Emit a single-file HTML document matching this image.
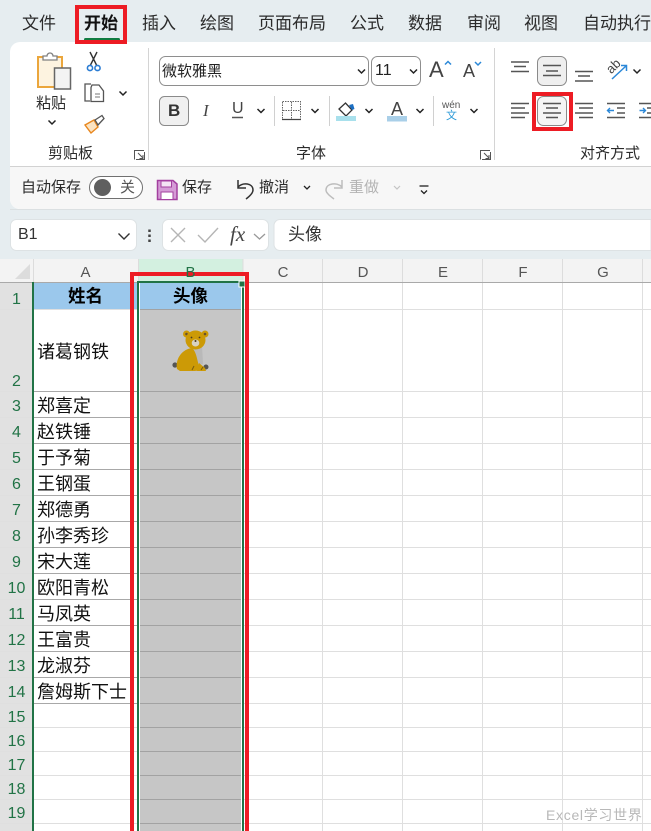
<!DOCTYPE html>
<html lang="zh">
<head>
<meta charset="utf-8">
<title>Excel</title>
<style>
html,body{margin:0;padding:0;}
body{width:651px;height:831px;overflow:hidden;position:relative;background:#fff;font-family:"Liberation Sans","Noto Sans CJK SC",sans-serif;color:#222;}
#g{position:absolute;left:0;top:0;}
.t{position:absolute;white-space:nowrap;line-height:1;}
.tab{font-size:17px;top:15px;color:#2b2b2b;}
.c{font-size:18px;left:37px;color:#111;}
.h{font-size:17.5px;font-weight:700;color:#000;top:288px;}
.r{font-size:16px;color:#217346;text-align:center;width:33px;left:0;}
.ch{font-size:15px;color:#555;top:265px;text-align:center;}
.s{font-size:15px;color:#2b2b2b;}
</style>
</head>
<body>
<svg id="g" width="651" height="831" viewBox="0 0 651 831" fill="none" xmlns="http://www.w3.org/2000/svg">
<rect width="651" height="259" fill="#e6edf0"/>
<!-- ribbon -->
<path d="M651 42H20a10 10 0 0 0-10 10V199a10 10 0 0 0 10 10H651Z" fill="#fff"/>
<path d="M651 166H10V199a10 10 0 0 0 10 10H651Z" fill="#f7f7f7"/>
<path d="M10 166.500H651" stroke="#d2d2d2" stroke-width="1"/>
<path d="M10 209.500H651" stroke="#dbe0e2"/>
<path d="M148.500 48V160M494.500 48V160" stroke="#d4d4d4"/>
<path d="M274.500 96V126M329.500 96V126M433.500 96V126" stroke="#d0d0d0"/>
<rect x="84" y="38" width="36" height="3" rx="1.500" fill="#107c41"/>
<!-- paste -->
<rect x="38" y="57" width="24" height="30" fill="#fdf3e0" stroke="#eba63c" stroke-width="2"/>
<path d="M43 60V56h4a3 3 0 0 1 6 0h4v4H43Z" fill="#fff" stroke="#808080" stroke-width="1.300"/>
<rect x="54.500" y="68" width="16" height="21" fill="#f3f3f3" stroke="#666" stroke-width="1.500"/>
<!-- scissors -->
<path d="M97 52 90.500 65M90 52 96.500 65" stroke="#333" stroke-width="1.400"/>
<circle cx="90" cy="68" r="2.600" stroke="#2b7cd3" stroke-width="1.600"/>
<circle cx="97.500" cy="68" r="2.600" stroke="#2b7cd3" stroke-width="1.600"/>
<!-- copy -->
<path d="M90 101H85V84h6" stroke="#555" stroke-width="1.300"/>
<path d="M91 87.500V101.500H103.500V91L99 85H92L91 87.500Z" fill="#fff" stroke="#555" stroke-width="1.300"/>
<path d="M95 94H100M95 97H100" stroke="#777"/>
<path d="M119.500 91.500 123 95l3.500-3.500M48.500 120.500 52 124l3.500-3.500" stroke="#222" stroke-width="1.500"/>
<!-- brush -->
<path d="M85 125 94 120 98 127 91 133Z" fill="#fbe3c2" stroke="#e8871e" stroke-width="1.400"/>
<path d="M95 120 102 115.500 104 118.500 98 125Z" fill="#fff" stroke="#555" stroke-width="1.300"/>
<!-- launchers -->
<g stroke="#555" stroke-width="1"><path d="M134.500 159.500V150.500H144M144.500 152V159.500H136M138 153 143 158M143 155V158.500H139.500"/></g>
<g stroke="#555" stroke-width="1" transform="translate(346 0)"><path d="M134.500 159.500V150.500H144M144.500 152V159.500H136M138 153 143 158M143 155V158.500H139.500"/></g>
<!-- font boxes -->
<rect x="159.500" y="56.500" width="209" height="29" rx="6" fill="#fff" stroke="#8e8e8e"/>
<rect x="371.500" y="56.500" width="49" height="29" rx="6" fill="#fff" stroke="#8e8e8e"/>
<path d="M358 69.500 361.500 73 365 69.500M410 69.500 413.500 73 417 69.500" stroke="#222" stroke-width="1.500"/>
<path d="M445 64.500 448 61.500 451 64.500" stroke="#2b88d8" stroke-width="1.500"/>
<path d="M475 62 478 65 481 62" stroke="#2b88d8" stroke-width="1.500"/>
<!-- B -->
<rect x="159.500" y="96.500" width="29" height="29" rx="5" fill="#f0f0f0" stroke="#8a8a8a"/>
<path d="M232 117.500H243" stroke="#555" stroke-width="1.500"/>
<!-- borders -->
<rect x="282.500" y="101.500" width="18" height="18" stroke="#666" stroke-dasharray="1.500 1"/>
<path d="M291.500 102V119M283 110.500H300" stroke="#666" stroke-dasharray="1.500 1"/>
<path d="M282 119.500H301" stroke="#444" stroke-width="1.200"/>
<!-- fill -->
<path d="M339 109 345.500 103 352 110 346 116Z" fill="#fff" stroke="#333" stroke-width="1.300"/>
<path d="M349 105 353 104 354.500 109 352 110Z" fill="#1b6ec2"/>
<rect x="336" y="116" width="20" height="5" fill="#a8e0ec"/>
<rect x="387" y="116" width="20" height="5.500" fill="#a9cfe8"/>
<g stroke="#222" stroke-width="1.500">
<path d="M257.500 109 261 112.500 264.500 109M311.500 109 315 112.500 318.500 109M365.500 109 369 112.500 372.500 109M416.500 109 420 112.500 423.500 109M470.500 109 474 112.500 477.500 109M633.500 69.500 637 73 640.500 69.500"/>
<path d="M304 186 307 189 310 186M421 190.500 424 193.500 427 190.500" stroke-width="1.300"/>
<path d="M419.500 186H428.500" stroke-width="1.300"/>
</g>
<path d="M394 186 397 189 400 186" stroke="#c4c4c4" stroke-width="1.200"/>
<!-- align -->
<rect x="537.500" y="56.500" width="29" height="29" rx="6" fill="#efefef" stroke="#8a8a8a"/>
<rect x="537.500" y="96.500" width="29" height="29" rx="6" fill="#f5f5f5" stroke="#8a8a8a"/>
<g stroke="#555" stroke-width="1.500">
<path d="M511 62H529M514 66.500H526M511 71.500H529"/>
<path d="M543 65.500H561M546 71H558M543 75.500H561"/>
<path d="M575 71.500H593M578 76H590M575 81H593"/>
<path d="M511 103.500H529M511 108H525M511 113H529M511 117.500H525"/>
<path d="M543 103.500H561M546 108H558M543 113H561M546 117.500H558"/>
<path d="M575 103.500H593M579 108H593M575 113H593M579 117.500H593"/>
<path d="M607 103.500H625M617 108H625M617 113H625M607 117.500H625"/>
<path d="M639 103.500H651M647 108H651M647 113H651M639 117.500H651"/>
</g>
<path d="M614 110.500H607.500M610 108 607.500 110.500 610 113" stroke="#2b88d8" stroke-width="1.400"/>
<path d="M639.500 110.500H645M643 108 645.500 110.500 643 113" stroke="#2b88d8" stroke-width="1.400"/>
<path d="M612 79 626 66M621 65.500H626.500V71" stroke="#2b88d8" stroke-width="1.500"/>
<text x="607" y="72" transform="rotate(-45 612 68)" font-size="13" fill="#444" font-family="Liberation Sans">ab</text>
<!-- toggle -->
<rect x="89.500" y="176.500" width="53" height="22" rx="11" fill="#fff" stroke="#707070"/>
<circle cx="102.500" cy="187.500" r="8.500" fill="#5f5f5f"/>
<!-- save -->
<path d="M157.500 180.500H173L177 184V199.500H157.500Z" fill="#d59bd6" stroke="#a3409f" stroke-width="1.500"/>
<rect x="161" y="181" width="10.500" height="6" fill="#f4e4f4" stroke="#a3409f"/>
<rect x="161" y="192" width="12" height="7.500" fill="#fff" stroke="#a3409f"/>
<!-- undo / redo -->
<path d="M238 180V188H246M238 187C243 182 253 183 253 190 253 193 250 196 246 199" stroke="#333" stroke-width="1.500"/>
<path d="M342 180V188H334M342 187C337 182 326 183 326 190 326 193 330 196 334 199" stroke="#bdbdbd" stroke-width="1.500"/>
<!-- formula bar -->
<rect x="10.500" y="219.500" width="126" height="31" rx="6" fill="#fff" stroke="#dde2e4"/>
<path d="M118.500 233.500 124 239 129.500 233.500" stroke="#333" stroke-width="1.400"/>
<path d="M149.500 229.500V232M149.500 234.500V237M149.500 239.500V242" stroke="#444" stroke-width="2.500"/>
<rect x="162.500" y="219.500" width="106" height="31" rx="6" fill="#fff" stroke="#dde2e4"/>
<path d="M171 228 185 242M185 228 171 242" stroke="#b5b5b5" stroke-width="1.400"/>
<path d="M198 235 205 242 218 228" stroke="#b5b5b5" stroke-width="1.400"/>
<path d="M254 234 259.500 239 265 234" stroke="#999" stroke-width="1.300"/>
<path d="M651 219.500H280a6 6 0 0 0-6 6V244.500a6 6 0 0 0 6 6H651Z" fill="#fff" stroke="#dde2e4"/>
<!-- col header -->
<rect y="259" width="651" height="23" fill="#f3f3f3"/>
<rect x="138" y="259" width="105" height="23" fill="#d3f0e0"/>
<path d="M30 264V279H15Z" fill="#dcdcdc"/>
<path d="M33.500 259V282M138.500 259V282M243 259V282M322.500 259V282M402.500 259V282M482.500 259V282M562.500 259V282M642.500 259V282" stroke="#dcdcdc"/>
<path d="M0 282.500H651" stroke="#a9a9a9"/>
<!-- row header -->
<rect y="283" width="33" height="548" fill="#e1e1e1"/>
<!-- grid -->
<g stroke="#dfdfdf" stroke-width="1">
<path d="M322.500 283V831M402.500 283V831M482.500 283V831M562.500 283V831M642.500 283V831"/>
<path d="M0 309.500H651M0 391.500H651M0 417.500H651M0 443.500H651M0 469.500H651M0 495.500H651M0 521.500H651M0 547.500H651M0 573.500H651M0 599.500H651M0 625.500H651M0 651.500H651M0 677.500H651M0 703.500H651M0 727.500H651M0 751.500H651M0 775.500H651M0 799.500H651M0 823.500H651"/>
</g>
<path d="M33 391.500H138M33 417.500H138M33 443.500H138M33 469.500H138M33 495.500H138M33 521.500H138M33 547.500H138M33 573.500H138M33 599.500H138M33 625.500H138M33 651.500H138M33 677.500H138M33 703.500H138" stroke="#a8a8a8"/>
<!-- header fill -->
<rect x="33" y="283" width="105" height="26" fill="#9bc8ec"/>
<rect x="139" y="283" width="103" height="26" fill="#9bc8ec"/>
<!-- column B -->
<rect x="140" y="309" width="101" height="522" fill="#c6c6c6"/>
<path d="M140 309.500H241M140 391.500H241M140 417.500H241M140 443.500H241M140 469.500H241M140 495.500H241M140 521.500H241M140 547.500H241M140 573.500H241M140 599.500H241M140 625.500H241M140 651.500H241M140 677.500H241M140 703.500H241M140 727.500H241M140 751.500H241M140 775.500H241M140 799.500H241M140 823.500H241" stroke="#a2a2a2"/>
<path d="M139.500 283V831M241.500 283V831" stroke="#fff"/>
<!-- selection -->
<path d="M33 282V831" stroke="#217346" stroke-width="2"/>
<path d="M138 831V282H243V831" stroke="#217346" stroke-width="2"/>
<rect x="239" y="281" width="6" height="6" fill="#217346" stroke="#fff" stroke-width="1"/>
<!-- bear -->
<g>
<circle cx="175" cy="365" r="2.600" fill="#555"/>
<circle cx="206" cy="367" r="2.500" fill="#555"/>
<path d="M192 345 L202 345 L203 364 L196 366Z" fill="#b9b9b9"/>
<path d="M177 369C175 358 183 349 192 348 197 352 197 362 200 368 201 371 195 371 192 371H180Z" fill="#cc9a06"/>
<path d="M197 371 199 363 205 368 206 371Z" fill="#cc9a06"/>
<circle cx="186.500" cy="334" r="3.500" fill="#cc9a06"/>
<circle cx="205" cy="334" r="3.500" fill="#cc9a06"/>
<circle cx="186.500" cy="334" r="1.300" fill="#665030"/>
<circle cx="205" cy="334" r="1.300" fill="#665030"/>
<ellipse cx="195.500" cy="340" rx="10" ry="9.500" fill="#cc9a06"/>
<ellipse cx="195.500" cy="343" rx="3.800" ry="3.500" fill="#d8d2c2"/>
<circle cx="191.500" cy="337.500" r=".9" fill="#4a3a20"/>
<circle cx="199.500" cy="337.500" r=".9" fill="#4a3a20"/>
<circle cx="195.500" cy="341" r="1" fill="#4a3a20"/>
<path d="M192 370 194 366M201 370 203 367" stroke="#7a5d10"/>
</g>
<!-- red boxes -->
<rect x="77" y="7" width="48" height="35" stroke="#ed1c24" stroke-width="4"/>
<rect x="534" y="94" width="37" height="35" stroke="#ed1c24" stroke-width="4"/>
<path d="M132 833V274H247V833" stroke="#ed1c24" stroke-width="4"/>
</svg>

<div class="t tab" style="left:22px">文件</div>
<div class="t tab" style="left:84px;font-weight:700;color:#111">开始</div>
<div class="t tab" style="left:142px">插入</div>
<div class="t tab" style="left:200px">绘图</div>
<div class="t tab" style="left:258px">页面布局</div>
<div class="t tab" style="left:350px">公式</div>
<div class="t tab" style="left:408px">数据</div>
<div class="t tab" style="left:467px">审阅</div>
<div class="t tab" style="left:524px">视图</div>
<div class="t tab" style="left:583px">自动执行</div>

<div class="t s" style="left:36px;top:96px">粘贴</div>
<div class="t s" style="left:48px;top:146px">剪贴板</div>
<div class="t s" style="left:296px;top:146px">字体</div>
<div class="t s" style="left:580px;top:146px">对齐方式</div>
<div class="t s" style="left:162px;top:64px;color:#222">微软雅黑</div>
<div class="t" style="left:375px;top:63px;font-size:16px;color:#222">11</div>
<div class="t" style="left:429px;top:59px;font-size:22px;color:#444">A</div>
<div class="t" style="left:463px;top:62px;font-size:18px;color:#444">A</div>
<div class="t" style="left:168px;top:102px;font-size:17px;font-weight:700;color:#333">B</div>
<div class="t" style="left:203px;top:102px;font-size:17px;font-style:italic;font-family:'Liberation Serif',serif;color:#444">I</div>
<div class="t" style="left:232px;top:101px;font-size:16px;color:#444">U</div>
<div class="t" style="left:391px;top:100px;font-size:18px;color:#444">A</div>
<div class="t" style="left:442px;top:101px;font-size:10px;color:#555">wén</div>
<div class="t" style="left:446px;top:111px;font-size:11px;color:#2b9ad8">文</div>

<div class="t s" style="left:21px;top:180px">自动保存</div>
<div class="t s" style="left:120px;top:180px;color:#555">关</div>
<div class="t s" style="left:182px;top:180px">保存</div>
<div class="t s" style="left:259px;top:180px">撤消</div>
<div class="t s" style="left:349px;top:180px;color:#b4b4b4">重做</div>

<div class="t" style="left:18px;top:227px;font-size:16px;color:#333">B1</div>
<div class="t" style="left:230px;top:224px;font-size:21px;font-style:italic;font-family:'Liberation Serif',serif;color:#444">fx</div>
<div class="t" style="left:288px;top:226px;font-size:17px;color:#333">头像</div>

<div class="t ch" style="left:33px;width:105px">A</div>
<div class="t ch" style="left:138px;width:105px;color:#217346">B</div>
<div class="t ch" style="left:243px;width:80px">C</div>
<div class="t ch" style="left:323px;width:80px">D</div>
<div class="t ch" style="left:403px;width:80px">E</div>
<div class="t ch" style="left:483px;width:80px">F</div>
<div class="t ch" style="left:563px;width:80px">G</div>

<div class="t h" style="left:68px">姓名</div>
<div class="t h" style="left:173px">头像</div>

<div class="t r" style="top:292px">1</div>
<div class="t r" style="top:374px">2</div>
<div class="t r" style="top:399px">3</div>
<div class="t r" style="top:425px">4</div>
<div class="t r" style="top:451px">5</div>
<div class="t r" style="top:477px">6</div>
<div class="t r" style="top:503px">7</div>
<div class="t r" style="top:529px">8</div>
<div class="t r" style="top:555px">9</div>
<div class="t r" style="top:581px">10</div>
<div class="t r" style="top:607px">11</div>
<div class="t r" style="top:633px">12</div>
<div class="t r" style="top:659px">13</div>
<div class="t r" style="top:685px">14</div>
<div class="t r" style="top:710px">15</div>
<div class="t r" style="top:734px">16</div>
<div class="t r" style="top:758px">17</div>
<div class="t r" style="top:782px">18</div>
<div class="t r" style="top:806px">19</div>

<div class="t c" style="top:343px">诸葛钢铁</div>
<div class="t c" style="top:397px">郑喜定</div>
<div class="t c" style="top:423px">赵铁锤</div>
<div class="t c" style="top:449px">于予菊</div>
<div class="t c" style="top:475px">王钢蛋</div>
<div class="t c" style="top:501px">郑德勇</div>
<div class="t c" style="top:527px">孙李秀珍</div>
<div class="t c" style="top:553px">宋大莲</div>
<div class="t c" style="top:579px">欧阳青松</div>
<div class="t c" style="top:605px">马凤英</div>
<div class="t c" style="top:631px">王富贵</div>
<div class="t c" style="top:657px">龙淑芬</div>
<div class="t c" style="top:683px">詹姆斯下士</div>

<div class="t" style="left:546px;top:808px;font-size:14px;color:#b8b8b8;letter-spacing:.7px">Excel学习世界</div>
</body>
</html>
